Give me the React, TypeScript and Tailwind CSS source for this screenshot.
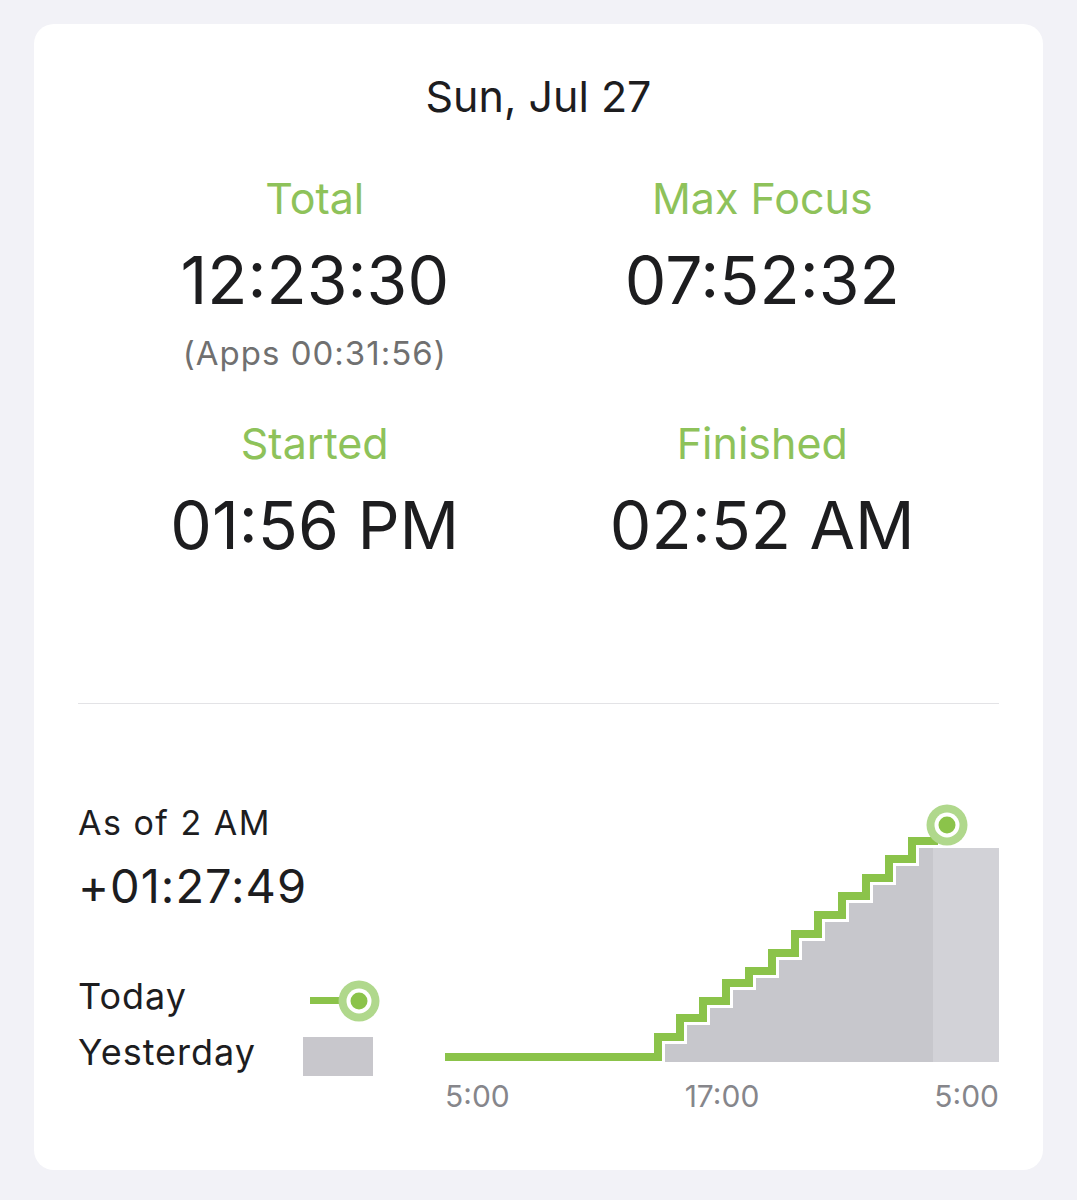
import React from "react";

const GREEN = "#8bc34a";
const RING = "#b0d88c";

// step function for today, in chart-local coords (page x - 447, page y - 800)
const risers: [number, number][] = [
  [660, 1037],
  [682, 1018],
  [705, 1001],
  [728, 983],
  [751, 971],
  [774, 953],
  [797, 934],
  [820, 915],
  [844, 896],
  [868, 878],
  [891, 859],
  [914, 841],
];

const OX = 447;
const OY = 800;

function todayPath() {
  let d = `M0 ${1057 - OY}`;
  let prevY = 1057;
  for (const [x, y] of risers) {
    d += ` L${x - OX} ${prevY - OY} L${x - OX} ${y - OY}`;
    prevY = y;
  }
  d += ` L${940 - OX} ${prevY - OY}`;
  return d;
}

function yesterdayPoints() {
  const pts: string[] = [];
  let prevY = 1062;
  for (const [x, y] of risers) {
    pts.push(`${x + 7 - OX},${prevY - OY}`);
    pts.push(`${x + 7 - OX},${y + 7 - OY}`);
    prevY = y + 7;
  }
  pts.push(`${935 - OX},${prevY - OY}`);
  pts.push(`${935 - OX},${1062 - OY}`);
  return `${667 - OX},${1062 - OY} ` + pts.join(" ");
}

function Marker({ cx, cy }: { cx: number; cy: number }) {
  return (
    <>
      <circle cx={cx} cy={cy} r={20.5} fill={RING} />
      <circle cx={cx} cy={cy} r={12.5} fill="#ffffff" />
      <circle cx={cx} cy={cy} r={8.5} fill={GREEN} />
    </>
  );
}

function Stat({ label, value, sub }: { label: string; value: string; sub?: string }) {
  return (
    <div className="flex flex-col items-center">
      <div className="text-[43px] leading-[50px] text-[#8ec25a]">{label}</div>
      <div className="mt-[19px] text-[66px] leading-[76px] text-[#1d1d1f]">{value}</div>
      {sub && (
        <div className="mt-[15px] text-[33px] leading-[40px] tracking-[1px] text-[#707070]">{sub}</div>
      )}
    </div>
  );
}

function Chart() {
  return (
    <div className="flex w-[554px] flex-col">
      <svg width={554} height={266} viewBox="0 0 554 266">
        <polygon points={yesterdayPoints()} fill="#c7c7cc" />
        <rect x={935 - OX} y={848 - OY} width={1001 - 935} height={1062 - 848} fill="#d2d2d7" />
        <path d={todayPath()} fill="none" stroke={GREEN} strokeWidth={8} strokeLinejoin="miter" />
        <Marker cx={949 - OX} cy={825 - OY} />
      </svg>
      <div className="mt-[12px] flex justify-between text-[30px] leading-[36px] text-[#86868b]">
        <span>5:00</span>
        <span>17:00</span>
        <span>5:00</span>
      </div>
    </div>
  );
}

export default function App() {
  return (
    <div className="min-h-[1200px] bg-[#f2f2f7] px-[34px] pt-[24px] font-['Inter','Liberation_Sans',sans-serif]">
      <div className="h-[1146px] rounded-[20px] bg-white">
        <div className="pt-[48px] text-center text-[43px] leading-[48px] text-[#1d1d1f]">Sun, Jul 27</div>

        <div className="mt-[53px] grid grid-cols-2 gap-y-[45px] px-[57px]">
          <Stat label="Total" value="12:23:30" sub="(Apps 00:31:56)" />
          <Stat label="Max Focus" value="07:52:32" />
          <Stat label="Started" value="01:56 PM" />
          <Stat label="Finished" value="02:52 AM" />
        </div>

        <div className="mx-[44px] mt-[140px] h-px bg-[#e3e3e6]" />

        <div className="mx-[44px] flex">
          <div className="w-[369px] pt-[97px] text-[#1d1d1f]">
            <div className="text-[34px] leading-[44px] tracking-[1.5px]">As of 2 AM</div>
            <div className="mt-[13px] text-[47px] leading-[56px] tracking-[1px]">+01:27:49</div>

            <div className="mt-[58px] grid grid-cols-[225px_80px] items-center gap-y-[8px] text-[36px] tracking-[1px]">
              <div className="leading-[48px]">Today</div>
              <svg width={80} height={48} viewBox="0 0 80 48" className="translate-y-[5px]">
                <rect x={7} y={20} width={40} height={7} fill={GREEN} />
                <Marker cx={56} cy={24} />
              </svg>
              <div className="leading-[48px]">Yesterday</div>
              <div className="h-[39px] w-[70px] translate-y-[4px] bg-[#c8c7cc]" />
            </div>
          </div>

          <div className="pt-[96px]">
            <Chart />
          </div>
        </div>
      </div>
    </div>
  );
}
